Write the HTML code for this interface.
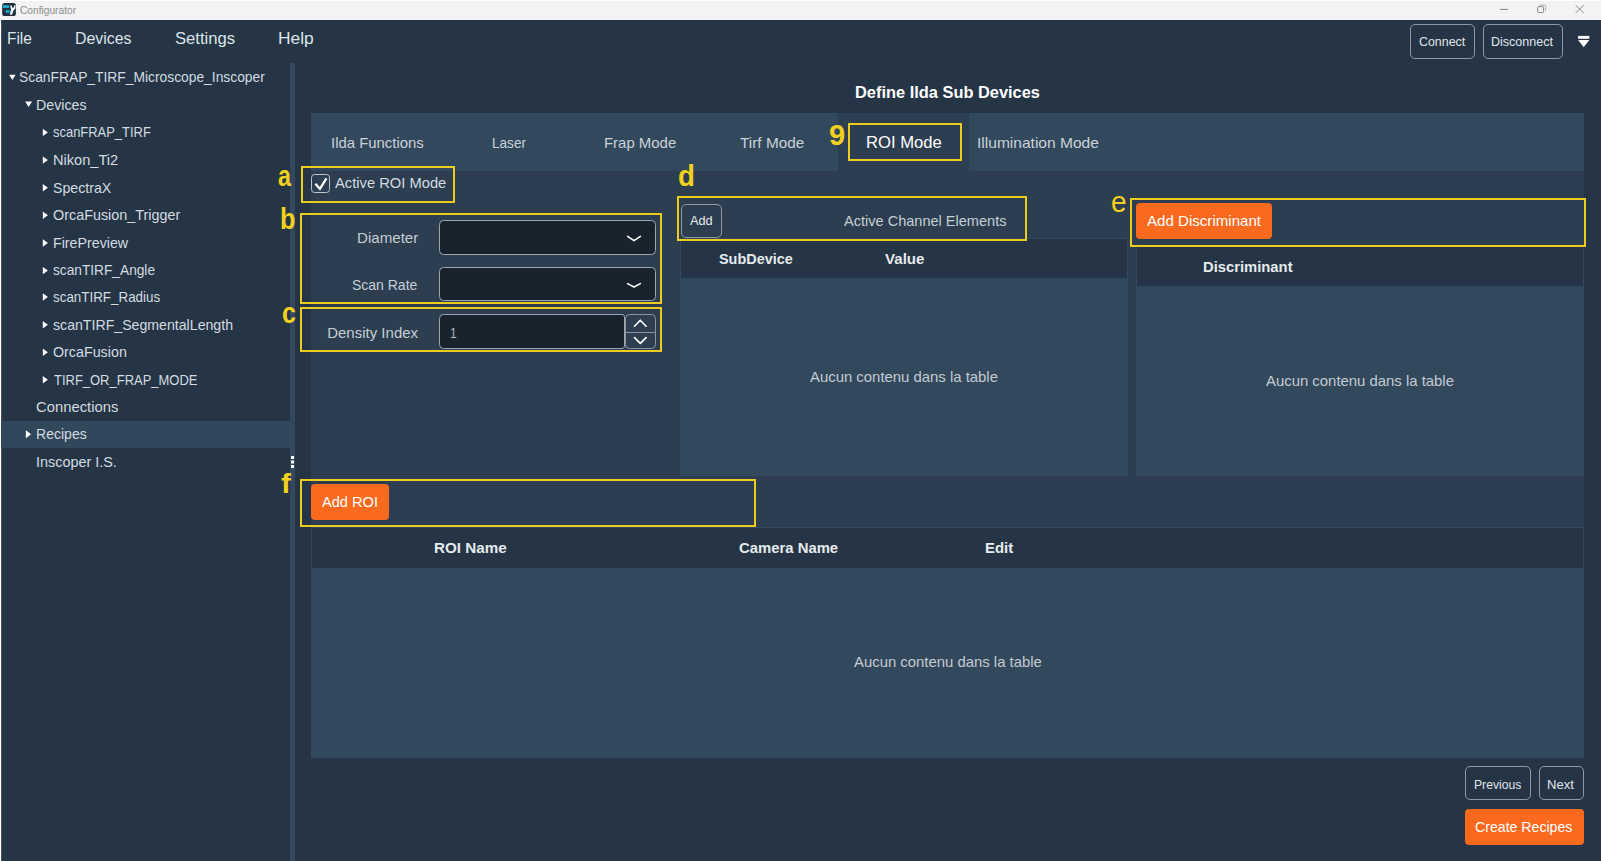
<!DOCTYPE html>
<html lang="en">
<head>
<meta charset="utf-8">
<title>Configurator</title>
<style>
html,body{margin:0;padding:0}
body{width:1601px;height:861px;overflow:hidden;background:#253545;position:relative;font-family:"Liberation Sans",sans-serif}
.r{position:absolute;box-sizing:border-box}
.t{position:absolute;white-space:nowrap;line-height:1;margin:0;padding:0;transform-origin:0 0}
.btn{border:1.2px solid #8f99a3;border-radius:5px;background:transparent}
.obtn{border-radius:4px;background:#f96a1f}
.inp{border:1.5px solid #9ea5ad;border-radius:4.5px;background:#18232d}
.yb{border:2.5px solid #edcb1f;background:transparent}
</style>
</head>
<body>
<!-- window frame -->
<div class="r" style="left:0;top:0;width:1601px;height:19px;background:#f3f3f3"></div>
<div class="r" style="left:0;top:0;width:1601px;height:1px;background:#ffffff"></div>
<div class="r" style="left:0;top:19px;width:1601px;height:1px;background:#f6f7f8"></div>
<div class="r" style="left:0;top:20px;width:1601px;height:1px;background:#203040"></div>
<div class="r" style="left:0;top:0;width:1px;height:861px;background:#ffffff"></div>
<div class="r" style="left:1px;top:21px;width:1px;height:840px;background:#44525f"></div>
<!-- app icon -->
<svg class="r" style="left:2px;top:2px" width="15" height="15" viewBox="0 0 15 15">
  <rect x="0.2" y="0.9" width="13.7" height="13.1" rx="2.6" fill="#21303f"/>
  <rect x="0.9" y="3.2" width="6.3" height="2.7" fill="#12b4d6"/>
  <rect x="3.7" y="8.2" width="3.9" height="2.6" fill="#12b4d6"/>
  <path d="M8.1 3.6 L9.6 3.4 L10.6 5.9 L11.7 5.6 L12.2 3.3 L13.5 3.3 L13.4 6.6 L11.6 8.2 L9.9 12.9 L7.8 12.6 L9.0 7.6 Z" fill="#e9f6f9"/>
</svg>
<!-- window controls -->
<svg class="r" style="left:1495px;top:2px" width="100" height="16" viewBox="0 0 100 16">
  <path d="M5 7.4 H13" stroke="#868686" stroke-width="1" fill="none"/>
  <rect x="42.6" y="4.6" width="6" height="6" rx="1.2" stroke="#868686" stroke-width="1" fill="none"/>
  <path d="M44.6 3.2 H49.4 Q50.6 3.2 50.6 4.4 V8.8" stroke="#a6a6a6" stroke-width="0.9" fill="none"/>
  <path d="M80.6 3.2 L88.8 10.9 M88.8 3.2 L80.6 10.9" stroke="#868686" stroke-width="0.95" fill="none"/>
</svg>
<!-- top-right buttons -->
<div class="r btn" style="left:1410px;top:24px;width:65px;height:35px"></div>
<div class="r btn" style="left:1483px;top:24px;width:80px;height:35px"></div>
<svg class="r" style="left:1576px;top:34px" width="16" height="16" viewBox="0 0 16 16">
  <rect x="2.1" y="1.9" width="11.2" height="2.9" fill="#ffffff"/>
  <path d="M2.1 6 H13.3 L7.7 13.3 Z" fill="#ffffff"/>
</svg>
<!-- sidebar -->
<div class="r" style="left:1px;top:421px;width:289px;height:27px;background:#31475c"></div>
<div class="r" style="left:290px;top:63px;width:5px;height:798px;background:#32485d"></div>
<div class="r" style="left:290.7px;top:456px;width:3.3px;height:3px;background:#fff;box-shadow:0 4.5px 0 #fff,0 9px 0 #fff"></div>
<!-- tree arrows -->
<svg class="r" style="left:0;top:60px" width="60" height="420" viewBox="0 0 60 420">
  <g fill="#ffffff">
    <path d="M9.1 14.8 H15.6 L12.35 20.1 Z"/>
    <path d="M25.2 41.6 H32.1 L28.65 46.9 Z"/>
    <path d="M42.8 68.7 L47.9 72.4 L42.8 76.1 Z"/>
    <path d="M42.8 96.4 L47.9 100.1 L42.8 103.8 Z"/>
    <path d="M42.8 124.0 L47.9 127.7 L42.8 131.4 Z"/>
    <path d="M42.8 151.6 L47.9 155.3 L42.8 159.0 Z"/>
    <path d="M42.8 179.3 L47.9 183.0 L42.8 186.7 Z"/>
    <path d="M42.8 206.9 L47.9 210.6 L42.8 214.3 Z"/>
    <path d="M42.8 233.3 L47.9 237.0 L42.8 240.7 Z"/>
    <path d="M42.8 261.0 L47.9 264.7 L42.8 268.4 Z"/>
    <path d="M42.8 288.6 L47.9 292.3 L42.8 296.0 Z"/>
    <path d="M42.8 316.1 L47.9 319.8 L42.8 323.5 Z"/>
    <path d="M25.9 370.3 L31.0 374.3 L25.9 378.3 Z"/>
  </g>
</svg>
<!-- main panel -->
<div class="r" style="left:311px;top:113px;width:1273px;height:58px;background:#32485d"></div>
<div class="r" style="left:311px;top:171px;width:1273px;height:587px;background:#2c3e50"></div>
<div class="r" style="left:838px;top:113px;width:130.5px;height:58px;background:#2c3e50"></div>
<!-- tables -->
<div class="r" style="left:680px;top:238px;width:448px;height:237.7px;background:#32485d"></div>
<div class="r" style="left:681px;top:239px;width:446px;height:38.6px;background:#253545"></div>
<div class="r" style="left:1136px;top:246px;width:448px;height:229.7px;background:#32485d"></div>
<div class="r" style="left:1137px;top:247px;width:446px;height:38.8px;background:#253545"></div>
<div class="r" style="left:311px;top:527px;width:1273px;height:231px;background:#32485d"></div>
<div class="r" style="left:312px;top:528px;width:1271px;height:39.5px;background:#253545"></div>
<!-- checkbox -->
<div class="r" style="left:311px;top:174px;width:19px;height:19.3px;border:1.2px solid #bec5cc;border-radius:3.5px;background:#2c3e50"></div>
<svg class="r" style="left:311px;top:174px" width="19" height="19" viewBox="0 0 19 19">
  <path d="M4.4 9.8 L8.9 14.9 L15.4 4.4" stroke="#ffffff" stroke-width="2.3" fill="none" stroke-linecap="butt" stroke-linejoin="miter"/>
</svg>
<!-- combos / spinner -->
<div class="r inp" style="left:439px;top:219.5px;width:216.5px;height:35px"></div>
<div class="r inp" style="left:439px;top:267px;width:216.5px;height:34px"></div>
<div class="r inp" style="left:439px;top:314px;width:185.5px;height:35px;border-radius:4.5px 3px 3px 4.5px"></div>
<div class="r" style="left:624.5px;top:314px;width:31px;height:18.5px;border:1.2px solid #8d969f;border-radius:4.5px 4.5px 0 0;background:#2c3e50"></div>
<div class="r" style="left:624.5px;top:331.5px;width:31px;height:17.5px;border:1.2px solid #8d969f;border-radius:0 0 4.5px 4.5px;background:#2c3e50"></div>
<svg class="r" style="left:620px;top:225px" width="40" height="130" viewBox="0 0 40 130">
  <g stroke="#ffffff" stroke-width="1.6" fill="none" stroke-linecap="round" stroke-linejoin="round">
    <path d="M7.6 11.4 L14 15.6 L20.4 11.4"/>
    <path d="M7.6 58.6 L14 62 L20.4 58.6"/>
    <path d="M14.5 101.2 L20.3 95.2 L26.1 101.2"/>
    <path d="M14.5 112.6 L20.3 118.4 L26.1 112.6"/>
  </g>
</svg>
<!-- Add small button -->
<div class="r btn" style="left:680.5px;top:203.5px;width:41px;height:34.5px"></div>
<!-- orange buttons -->
<div class="r obtn" style="left:1136px;top:203px;width:136px;height:36px"></div>
<div class="r obtn" style="left:311px;top:484px;width:78px;height:36px"></div>
<div class="r obtn" style="left:1465px;top:809px;width:119px;height:36px"></div>
<!-- bottom buttons -->
<div class="r btn" style="left:1465px;top:766px;width:66px;height:34px"></div>
<div class="r btn" style="left:1539px;top:766px;width:45px;height:34px"></div>
<!-- yellow annotation boxes -->
<div class="r yb" style="left:848.4px;top:123.2px;width:113.6px;height:37.9px"></div>
<div class="r yb" style="left:301.2px;top:165.5px;width:153.8px;height:37.4px"></div>
<div class="r yb" style="left:300.2px;top:213.1px;width:361.4px;height:91.2px"></div>
<div class="r yb" style="left:300.2px;top:306.9px;width:361.4px;height:45.4px"></div>
<div class="r yb" style="left:676.8px;top:196.1px;width:350.4px;height:44.6px"></div>
<div class="r yb" style="left:1130.1px;top:197.6px;width:455.8px;height:49.1px"></div>
<div class="r yb" style="left:300px;top:478.6px;width:455.5px;height:48.1px"></div>

<!-- text -->
<header aria-label="title bar">
<span class="t" id="t0" style="left:20.22px;top:5.00px;font-size:10.5px;color:#8c8c8c;transform:scaleX(0.9699)">Configurator</span>
</header>
<nav aria-label="menu bar">
<span class="t" id="t1" style="left:6.99px;top:30.00px;font-size:17px;color:#dde3e8;transform:scaleX(0.9062)">File</span>
<span class="t" id="t2" style="left:74.81px;top:30.00px;font-size:17px;color:#dde3e8;transform:scaleX(0.9351)">Devices</span>
<span class="t" id="t3" style="left:174.51px;top:30.00px;font-size:17px;color:#dde3e8;transform:scaleX(0.9793)">Settings</span>
<span class="t" id="t4" style="left:278.01px;top:30.00px;font-size:17px;color:#dde3e8;transform:scaleX(1.0231)">Help</span>
</nav>
<div aria-label="connection toolbar">
<span class="t" id="t5" style="left:1419.45px;top:35.00px;font-size:13px;color:#e0e5ea;transform:scaleX(0.9533)">Connect</span>
<span class="t" id="t6" style="left:1491.19px;top:35.00px;font-size:13px;color:#e0e5ea;transform:scaleX(0.9619)">Disconnect</span>
</div>
<aside aria-label="configuration tree">
<span class="t" id="t7" style="left:19.18px;top:69.00px;font-size:15px;color:#d4dbe1;transform:scaleX(0.9214)">ScanFRAP_TIRF_Microscope_Inscoper</span>
<span class="t" id="t8" style="left:35.59px;top:97.00px;font-size:15px;color:#d4dbe1;transform:scaleX(0.9467)">Devices</span>
<span class="t" id="t9" style="left:53.40px;top:124.00px;font-size:15px;color:#d4dbe1;transform:scaleX(0.8630)">scanFRAP_TIRF</span>
<span class="t" id="t10" style="left:52.68px;top:152.00px;font-size:15px;color:#d4dbe1;transform:scaleX(0.9742)">Nikon_Ti2</span>
<span class="t" id="t11" style="left:52.79px;top:180.00px;font-size:15px;color:#d4dbe1;transform:scaleX(0.9454)">SpectraX</span>
<span class="t" id="t12" style="left:53.05px;top:207.00px;font-size:15px;color:#d4dbe1;transform:scaleX(0.9583)">OrcaFusion_Trigger</span>
<span class="t" id="t13" style="left:52.72px;top:235.00px;font-size:15px;color:#d4dbe1;transform:scaleX(0.9488)">FirePreview</span>
<span class="t" id="t14" style="left:52.93px;top:262.00px;font-size:15px;color:#d4dbe1;transform:scaleX(0.9133)">scanTIRF_Angle</span>
<span class="t" id="t15" style="left:53.00px;top:289.00px;font-size:15px;color:#d4dbe1;transform:scaleX(0.8928)">scanTIRF_Radius</span>
<span class="t" id="t16" style="left:53.46px;top:317.00px;font-size:15px;color:#d4dbe1;transform:scaleX(0.9428)">scanTIRF_SegmentalLength</span>
<span class="t" id="t17" style="left:53.08px;top:344.00px;font-size:15px;color:#d4dbe1;transform:scaleX(0.9522)">OrcaFusion</span>
<span class="t" id="t18" style="left:53.90px;top:372.00px;font-size:15px;color:#d4dbe1;transform:scaleX(0.8648)">TIRF_OR_FRAP_MODE</span>
<span class="t" id="t19" style="left:36.30px;top:399.00px;font-size:15px;color:#d4dbe1;transform:scaleX(0.9878)">Connections</span>
<span class="t" id="t20" style="left:35.74px;top:426.00px;font-size:15px;color:#d4dbe1;transform:scaleX(0.9370)">Recipes</span>
<span class="t" id="t21" style="left:35.60px;top:454.00px;font-size:15px;color:#d4dbe1;transform:scaleX(0.9603)">Inscoper I.S.</span>
</aside>
<main aria-label="Define Ilda Sub Devices - ROI Mode">
<span class="t" id="t22" style="left:854.80px;top:84.00px;font-size:16.5px;color:#ffffff;font-weight:700;transform:scaleX(0.9935)">Define Ilda Sub Devices</span>
<span class="t" id="t23" style="left:330.79px;top:135.00px;font-size:15px;color:#cad2d9;transform:scaleX(0.9936)">Ilda Functions</span>
<span class="t" id="t24" style="left:491.99px;top:135.00px;font-size:15px;color:#cad2d9;transform:scaleX(0.9057)">Laser</span>
<span class="t" id="t25" style="left:604.37px;top:135.00px;font-size:15px;color:#cad2d9;transform:scaleX(0.9953)">Frap Mode</span>
<span class="t" id="t26" style="left:740.09px;top:135.00px;font-size:15px;color:#cad2d9;transform:scaleX(1.0247)">Tirf Mode</span>
<span class="t" id="t27" style="left:866.06px;top:135.00px;font-size:16px;color:#ffffff;transform:scaleX(1.0396)">ROI Mode</span>
<span class="t" id="t28" style="left:976.86px;top:135.00px;font-size:15px;color:#cad2d9;transform:scaleX(1.0369)">Illumination Mode</span>
<span class="t" id="t29" style="left:334.50px;top:175.00px;font-size:15px;color:#d4dbe1;transform:scaleX(0.9816)">Active ROI Mode</span>
<span class="t" id="t30" style="left:356.91px;top:230.00px;font-size:15px;color:#c6ced5;transform:scaleX(1.0073)">Diameter</span>
<span class="t" id="t31" style="left:352.03px;top:277.00px;font-size:15px;color:#c6ced5;transform:scaleX(0.9326)">Scan Rate</span>
<span class="t" id="t32" style="left:327.19px;top:325.00px;font-size:15px;color:#c6ced5">Density Index</span>
<span class="t" id="t33" style="left:449.82px;top:325.00px;font-size:15px;color:#aeb7c0;transform:scaleX(0.8031)">1</span>
<span class="t" id="t34" style="left:689.89px;top:215.00px;font-size:12px;color:#e8ecef;transform:scaleX(1.0640)">Add</span>
<span class="t" id="t35" style="left:843.51px;top:213.00px;font-size:15px;color:#c6ced5;transform:scaleX(0.9693)">Active Channel Elements</span>
<span class="t" id="t36" style="left:718.85px;top:251.00px;font-size:15px;color:#e6eaee;font-weight:700;transform:scaleX(0.9614)">SubDevice</span>
<span class="t" id="t37" style="left:884.93px;top:251.00px;font-size:15px;color:#e6eaee;font-weight:700;transform:scaleX(1.0072)">Value</span>
<span class="t" id="t38" style="left:1146.83px;top:213.00px;font-size:15px;color:#ffffff;transform:scaleX(1.0057)">Add Discriminant</span>
<span class="t" id="t39" style="left:1203.27px;top:259.00px;font-size:15px;color:#e6eaee;font-weight:700;transform:scaleX(0.9856)">Discriminant</span>
<span class="t" id="t40" style="left:810.00px;top:369.00px;font-size:15px;color:#c3cbd3;transform:scaleX(0.9929)">Aucun contenu dans la table</span>
<span class="t" id="t41" style="left:1266.00px;top:373.00px;font-size:15px;color:#c3cbd3;transform:scaleX(0.9929)">Aucun contenu dans la table</span>
<span class="t" id="t42" style="left:854.13px;top:654.00px;font-size:15px;color:#c3cbd3;transform:scaleX(0.9923)">Aucun contenu dans la table</span>
<span class="t" id="t43" style="left:321.82px;top:494.00px;font-size:15px;color:#ffffff;transform:scaleX(0.9728)">Add ROI</span>
<span class="t" id="t44" style="left:433.98px;top:540.00px;font-size:15px;color:#e6eaee;font-weight:700;transform:scaleX(1.0139)">ROI Name</span>
<span class="t" id="t45" style="left:738.93px;top:540.00px;font-size:15px;color:#e6eaee;font-weight:700;transform:scaleX(0.9907)">Camera Name</span>
<span class="t" id="t46" style="left:985.00px;top:540.00px;font-size:15px;color:#e6eaee;font-weight:700;transform:scaleX(0.9954)">Edit</span>
<span class="t" id="t47" style="left:1474.04px;top:779.00px;font-size:12.5px;color:#e0e5ea;transform:scaleX(0.9709)">Previous</span>
<span class="t" id="t48" style="left:1547.47px;top:779.00px;font-size:12.5px;color:#e0e5ea;transform:scaleX(1.0449)">Next</span>
<span class="t" id="t49" style="left:1474.53px;top:819.00px;font-size:15px;color:#ffffff;transform:scaleX(0.9420)">Create Recipes</span>
</main>
<div aria-label="annotations">
<span class="t" id="t50" style="left:278.21px;top:161.00px;font-size:29.5px;color:#f2d01e;font-weight:700;transform:scaleX(0.7890)">a</span>
<span class="t" id="t51" style="left:280.33px;top:205.00px;font-size:29px;color:#f2d01e;font-weight:700;transform:scaleX(0.8735)">b</span>
<span class="t" id="t52" style="left:281.94px;top:298.00px;font-size:29.5px;color:#f2d01e;font-weight:700;transform:scaleX(0.8504)">c</span>
<span class="t" id="t53" style="left:677.75px;top:162.00px;font-size:29px;color:#f2d01e;font-weight:700;transform:scaleX(0.9529)">d</span>
<span class="t" id="t54" style="left:1110.72px;top:188.00px;font-size:29px;color:#f2d01e;transform:scaleX(0.9669)">e</span>
<span class="t" id="t55" style="left:280.94px;top:469.00px;font-size:28.5px;color:#f2d01e;font-weight:700;transform:scaleX(1.0444)">f</span>
<span class="t" id="t56" style="left:828.62px;top:120.00px;font-size:30px;color:#f2d01e;font-weight:700;transform:scaleX(0.9710)">9</span>
</div>
</body>
</html>
